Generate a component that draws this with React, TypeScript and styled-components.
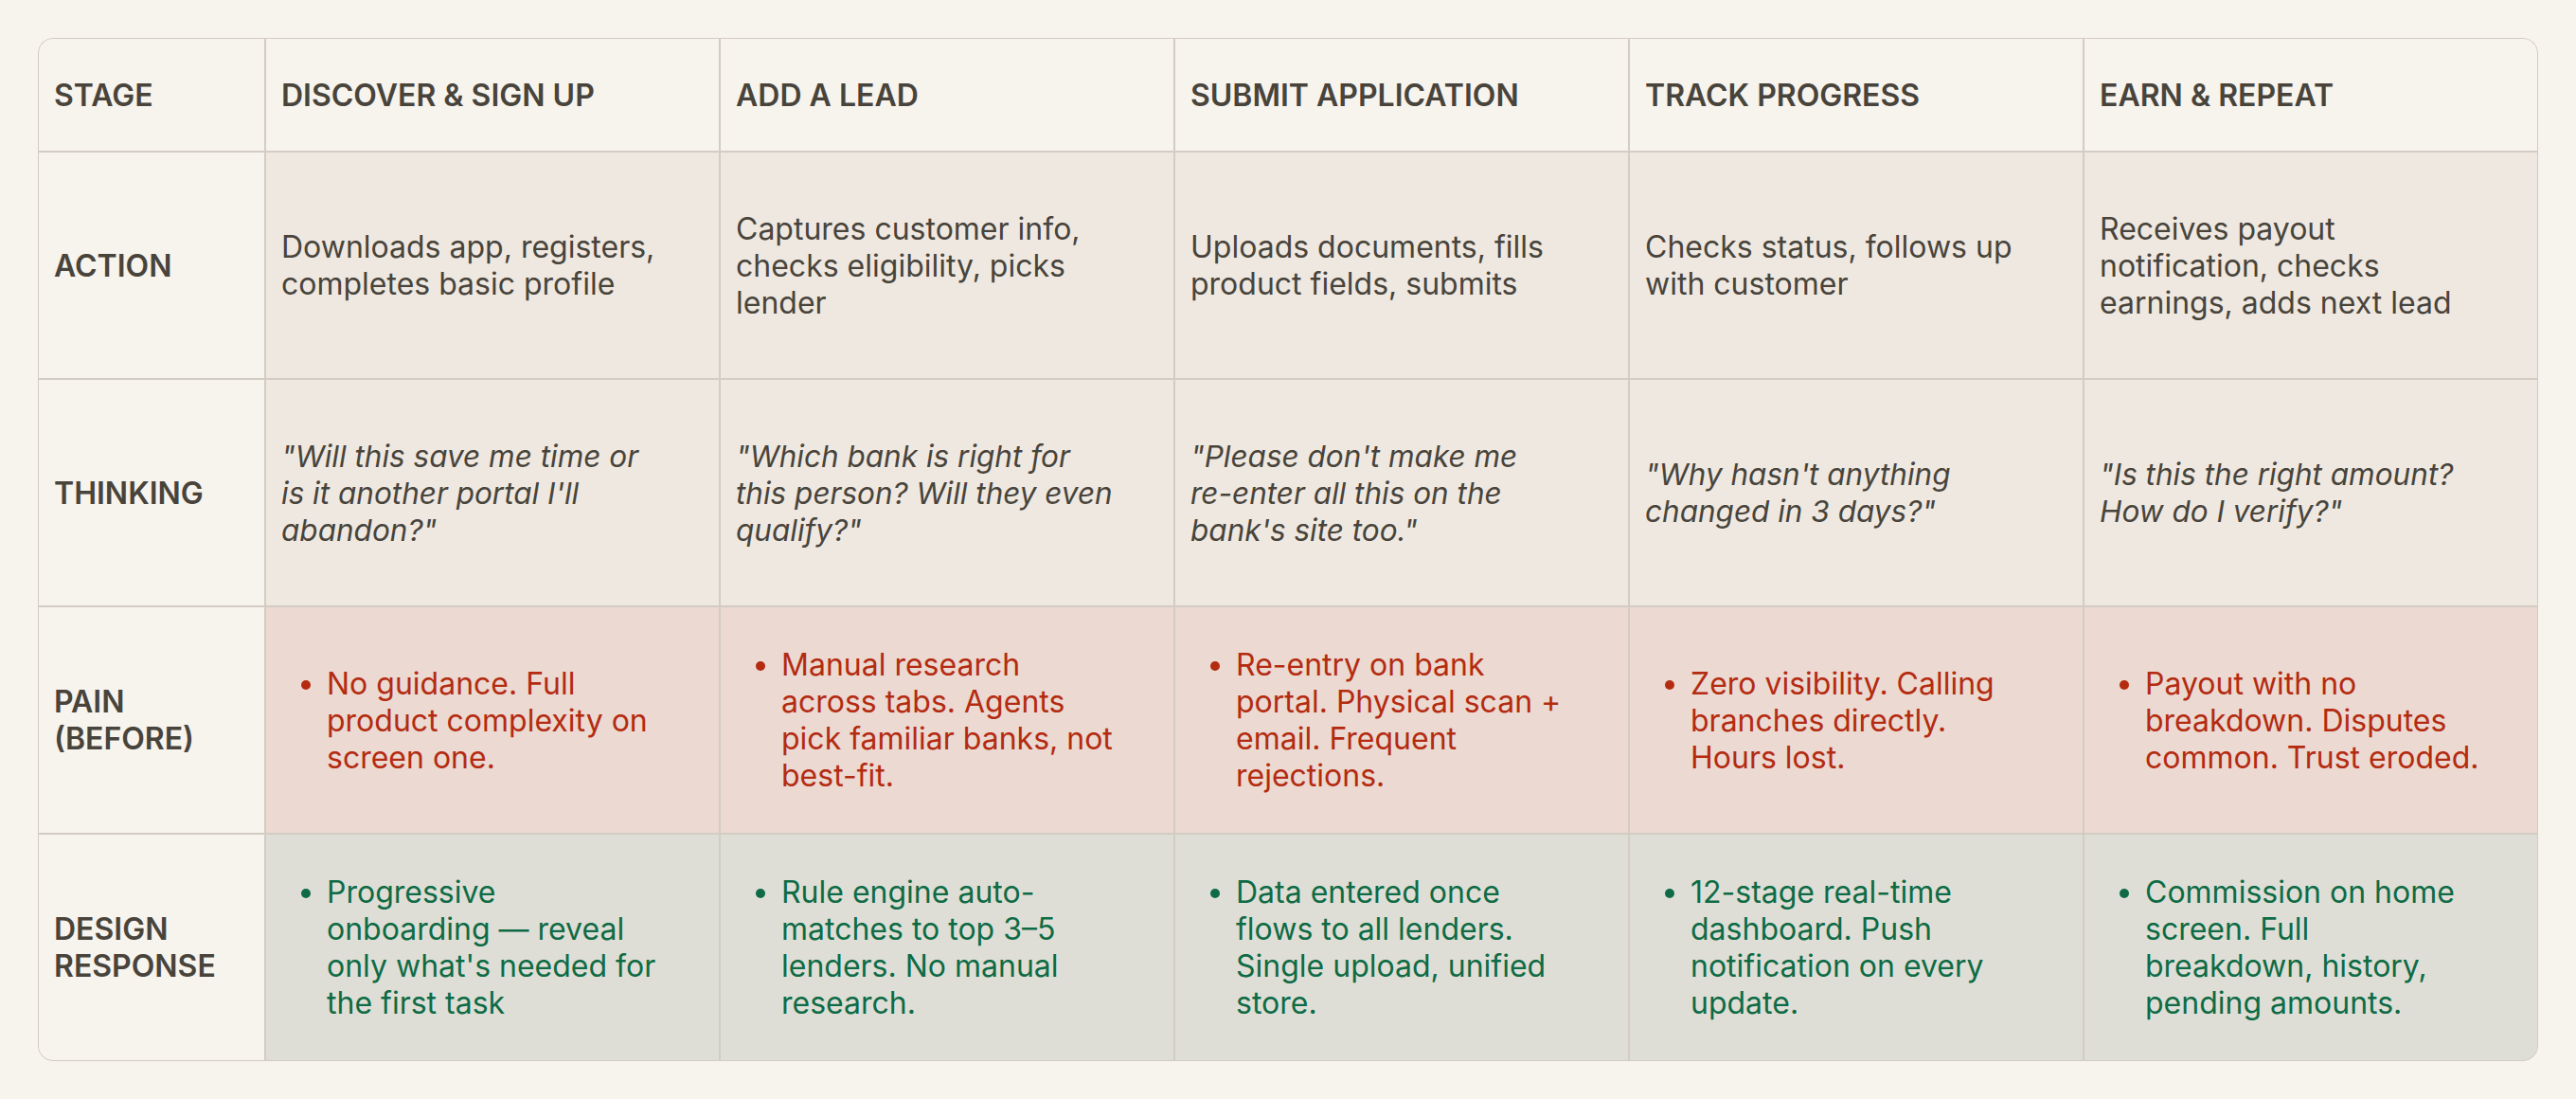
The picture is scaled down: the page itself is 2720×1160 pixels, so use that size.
import React from "react";
import styled, { createGlobalStyle } from "styled-components";

const GlobalStyle = createGlobalStyle`
  html, body {
    margin: 0;
    padding: 0;
    background: #f7f3ed;
  }
  body {
    font-family: Inter, "Noto Sans", "Liberation Sans", sans-serif;
    color: #48443b;
  }
`;

const Page = styled.div`
  padding: 40px;
  background: #f7f3ed;
  min-height: 1160px;
  box-sizing: border-box;
`;

const Table = styled.div`
  display: grid;
  grid-template-columns: 238px repeat(5, 478px);
  grid-template-rows: 118px repeat(4, 238px);
  gap: 2px;
  width: 2640px;
  box-sizing: border-box;
  border: 1px solid #d3ccc2;
  border-radius: 16px;
  overflow: hidden;
  background: #d3ccc2;
`;

type Tone = "head" | "neutral" | "pain" | "design";

const toneBg: Record<Tone, string> = {
  head: "#f7f3ed",
  neutral: "#efe8e1",
  pain: "#ebd9d2",
  design: "#dfded6",
};

const toneColor: Record<Tone, string> = {
  head: "#48443b",
  neutral: "#48443b",
  pain: "#b42b10",
  design: "#0e6b45",
};

const Cell = styled.div<{ $tone: Tone }>`
  display: flex;
  align-items: center;
  padding: 0 59px 0 16px;
  background: ${(p) => toneBg[p.$tone]};
  color: ${(p) => toneColor[p.$tone]};
  font-size: 32px;
  line-height: 39px;
  font-weight: 400;
`;

const HeadCell = styled(Cell)`
  font-weight: 600;
  padding-right: 16px;
`;

const LabelCell = styled(Cell)`
  font-weight: 600;
  padding-right: 16px;
`;

const Quote = styled.p`
  margin: 0;
  max-width: 398px;
  font-style: italic;
  font-size: 31.5px;
`;

const Bullets = styled.ul`
  margin: 0;
  padding-left: 48px;
  list-style: disc;
`;

const stages = [
  "DISCOVER & SIGN UP",
  "ADD A LEAD",
  "SUBMIT APPLICATION",
  "TRACK PROGRESS",
  "EARN & REPEAT",
];

const actions = [
  "Downloads app, registers, completes basic profile",
  "Captures customer info, checks eligibility, picks lender",
  "Uploads documents, fills product fields, submits",
  "Checks status, follows up with customer",
  "Receives payout notification, checks earnings, adds next lead",
];

const thoughts = [
  "\"Will this save me time or is it another portal I'll abandon?\"",
  "\"Which bank is right for this person? Will they even qualify?\"",
  "\"Please don't make me re-enter all this on the bank's site too.\"",
  "\"Why hasn't anything changed in 3 days?\"",
  "\"Is this the right amount? How do I verify?\"",
];

const pains = [
  "No guidance. Full product complexity on screen one.",
  "Manual research across tabs. Agents pick familiar banks, not best-fit.",
  "Re-entry on bank portal. Physical scan + email. Frequent rejections.",
  "Zero visibility. Calling branches directly. Hours lost.",
  "Payout with no breakdown. Disputes common. Trust eroded.",
];

const responses = [
  "Progressive onboarding \u2014 reveal only what's needed for the first task",
  "Rule engine auto-matches to top 3\u20135 lenders. No manual research.",
  "Data entered once flows to all lenders. Single upload, unified store.",
  "12-stage real-time dashboard. Push notification on every update.",
  "Commission on home screen. Full breakdown, history, pending amounts.",
];

export default function App() {
  return (
    <>
      <GlobalStyle />
      <Page>
        <Table>
          <HeadCell $tone="head">STAGE</HeadCell>
          {stages.map((s) => (
            <HeadCell key={s} $tone="head">
              {s}
            </HeadCell>
          ))}

          <LabelCell $tone="head">ACTION</LabelCell>
          {actions.map((a) => (
            <Cell key={a} $tone="neutral">
              {a}
            </Cell>
          ))}

          <LabelCell $tone="head">THINKING</LabelCell>
          {thoughts.map((t) => (
            <Cell key={t} $tone="neutral">
              <Quote>{t}</Quote>
            </Cell>
          ))}

          <LabelCell $tone="head">
            PAIN
            <br />
            (BEFORE)
          </LabelCell>
          {pains.map((p) => (
            <Cell key={p} $tone="pain">
              <Bullets>
                <li>{p}</li>
              </Bullets>
            </Cell>
          ))}

          <LabelCell $tone="head">
            DESIGN
            <br />
            RESPONSE
          </LabelCell>
          {responses.map((r) => (
            <Cell key={r} $tone="design">
              <Bullets>
                <li>{r}</li>
              </Bullets>
            </Cell>
          ))}
        </Table>
      </Page>
    </>
  );
}
